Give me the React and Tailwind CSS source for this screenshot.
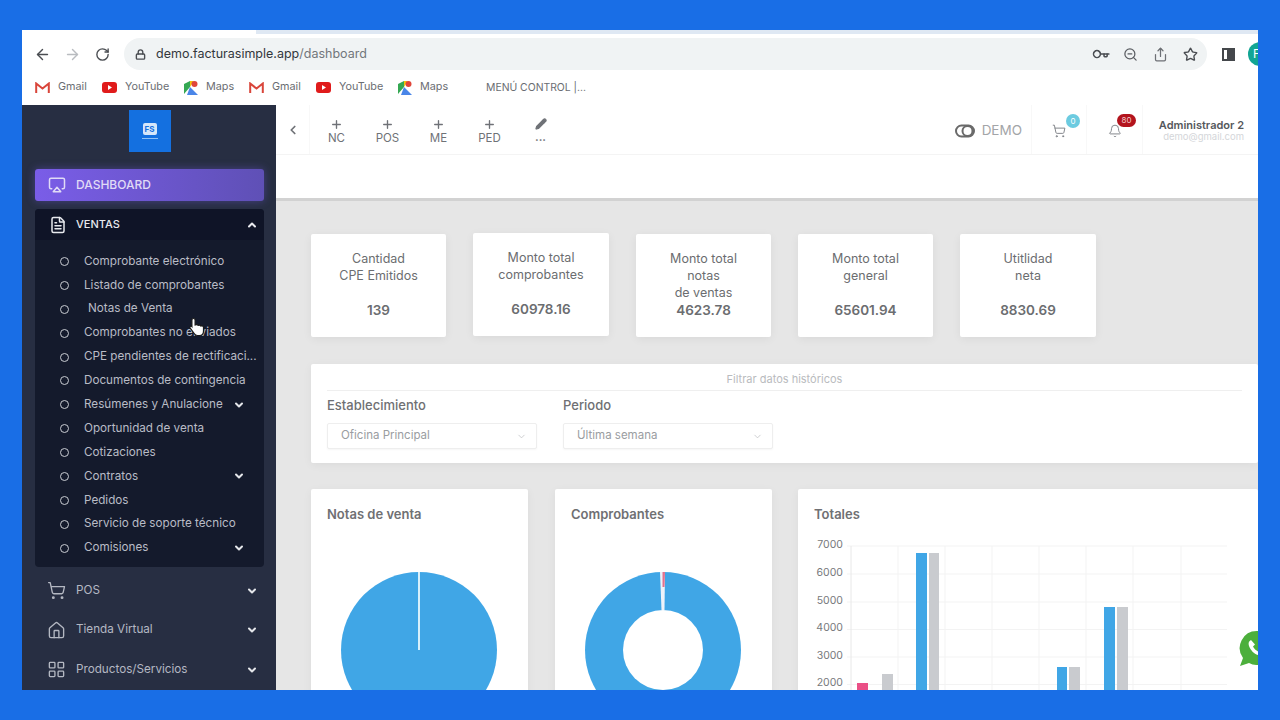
import React from 'react';
import {
    Airplay, ArrowLeft, ArrowRight, Bell, ChevronDown, ChevronLeft, ChevronUp, FileText, Home, Key, LayoutGrid,
    Lock, Pencil, Plus, RotateCw, Share, ShoppingCart, Star, ZoomOut,
} from 'lucide-react';

const ventas = [
    { label: 'Comprobante electrónico' },
    { label: 'Listado de comprobantes' },
    { label: 'Notas de Venta', indent: true },
    { label: 'Comprobantes no enviados' },
    { label: 'CPE pendientes de rectificaci...' },
    { label: 'Documentos de contingencia' },
    { label: 'Resúmenes y Anulacione', more: true },
    { label: 'Oportunidad de venta' },
    { label: 'Cotizaciones' },
    { label: 'Contratos', more: true },
    { label: 'Pedidos' },
    { label: 'Servicio de soporte técnico' },
    { label: 'Comisiones', more: true },
];

const stats = [
    { lines: ['Cantidad', 'CPE Emitidos'], value: '139', width: 'w-[135px]' },
    { lines: ['Monto total', 'comprobantes'], value: '60978.16', width: 'w-[136px] -translate-y-[1px]' },
    { lines: ['Monto total', 'notas', 'de ventas'], value: '4623.78', width: 'w-[135px]' },
    { lines: ['Monto total', 'general'], value: '65601.94', width: 'w-[135px]' },
    { lines: ['Utitlidad', 'neta'], value: '8830.69', width: 'w-[136px]' },
];

const shortcuts = ['NC', 'POS', 'ME', 'PED'];

const GmailIcon = () => (
    <svg width="15" height="12" viewBox="0 0 15 12" fill="none">
        <path d="M1.200 11V1.500L7.500 6.500 13.800 1.500V11" stroke="#d9453a" strokeWidth="2" />
    </svg>
);

const YoutubeIcon = () => (
    <svg width="15" height="11" viewBox="0 0 15 11">
        <rect width="15" height="11" rx="3" fill="#e01b1b" />
        <path d="M6 3l4 2.500L6 8z" fill="#fff" />
    </svg>
);

const MapsIcon = () => (
    <svg width="14" height="14" viewBox="0 0 14 14">
        <path d="M0 3l6-3v6L0 13z" fill="#35a853" />
        <path d="M6 6l8 8H3z" fill="#4a86e8" />
        <path d="M6 0h4L6 6z" fill="#f4c20d" />
        <circle cx="10.500" cy="3" r="3" fill="#e0453a" />
    </svg>
);

const Bookmark = ({ icon, label, className }) => (
    <div className={`flex items-center gap-[8px] shrink-0 ${className}`}>
        {icon}
        <span>{label}</span>
    </div>
);

const BrowserBar = () => (
    <div className="bg-white shrink-0">
        <div className="h-[4px] bg-[#dfe8f3]">
            <div className="h-full w-[234px] bg-white" />
        </div>
        <div className="h-[36px] mt-[2px] flex items-center text-[#4a4d52]">
            <ArrowLeft size={17} strokeWidth={2} className="ml-[12px] shrink-0" />
            <ArrowRight size={17} strokeWidth={2} className="ml-[13px] text-[#b9bcc0] shrink-0" />
            <RotateCw size={15} strokeWidth={2.2} className="ml-[14px] shrink-0" />
            <div className="ml-[14px] w-[1083px] h-[32px] rounded-full bg-[#f0f3f4] flex items-center shrink-0">
                <Lock size={11} strokeWidth={3} className="ml-[11px]" />
                <span className="ml-[10px] text-[12.5px] text-[#33373c]">
                    demo.facturasimple.app<span className="text-[#72767b]">/dashboard</span>
                </span>
                <div className="ml-auto mr-[9px] flex items-center gap-[15px]">
                    <Key size={15} strokeWidth={2.5} className="rotate-45" />
                    <ZoomOut size={15} className="text-[#5a5d62]" />
                    <Share size={15} className="text-[#6d7075]" />
                    <Star size={15} strokeWidth={2.2} />
                </div>
            </div>
            <div className="ml-[15px] w-[13px] h-[13px] border-2 border-[#44474b] flex justify-end shrink-0">
                <div className="w-[6px] bg-[#44474b]" />
            </div>
            <div className="ml-[13px] w-[24px] h-[24px] rounded-full bg-[#12a594] shrink-0 text-white text-[12px] pl-[5px] leading-[24px]">
                F
            </div>
        </div>
        <div className="h-[33px] pb-[2px] flex items-center text-[10.8px] text-[#6a6d72] pl-[13px]">
            <Bookmark icon={<GmailIcon />} label="Gmail" className="w-[67px]" />
            <Bookmark icon={<YoutubeIcon />} label="YouTube" className="w-[82px]" />
            <Bookmark icon={<MapsIcon />} label="Maps" className="w-[65px]" />
            <Bookmark icon={<GmailIcon />} label="Gmail" className="w-[67px]" />
            <Bookmark icon={<YoutubeIcon />} label="YouTube" className="w-[82px]" />
            <Bookmark icon={<MapsIcon />} label="Maps" className="w-[88px]" />
            <span className="text-[10.4px]">MENÚ CONTROL |...</span>
        </div>
    </div>
);

const SideItem = ({ icon: Icon, label }) => (
    <div className="h-[39.5px] flex items-center pl-[25px] pr-[18px] text-[#b4b8c2]">
        <Icon size={19} strokeWidth={1.7} />
        <span className="ml-[10px] text-[11.7px]">{label}</span>
        <ChevronDown size={12} strokeWidth={4} className="ml-auto text-[#e4e6ea]" />
    </div>
);

const Sidebar = () => (
    <aside className="w-[254px] shrink-0 bg-[#272e42] pl-[13px] pr-[12px] pt-[5px] overflow-hidden">
        <div className="mx-auto w-[42px] h-[42px] bg-[#1470e0] flex flex-col items-center justify-center">
            <div className="w-[14px] h-[12px] rounded-[2px] bg-[#d5e6fa] text-[#1470e0] text-[8px] font-bold leading-[12px] text-center">
                FS
            </div>
            <div className="w-[16px] h-[1px] mt-[3px] bg-[#8fc0f5]" />
        </div>
        <div className="mt-[17px] h-[32px] rounded-[3px] bg-gradient-to-r from-[#7a5de8] to-[#5f50b6] shadow-[0_0_8px_rgba(110,90,220,0.45)] flex items-center pl-[13px] text-[#e0dbf6]">
            <Airplay size={18} strokeWidth={2} />
            <span className="ml-[10px] text-[12px] font-medium">DASHBOARD</span>
        </div>
        <div className="mt-[8px] h-[358px] rounded-[4px] bg-[#141a2c]">
            <div className="h-[31px] rounded-t-[4px] bg-[#0f1427] flex items-center pl-[14px] pr-[6px] text-[#e8e9ee]">
                <FileText size={18} strokeWidth={2} />
                <span className="ml-[9px] text-[11px] font-medium">VENTAS</span>
                <ChevronUp size={12} strokeWidth={4} className="ml-auto" />
            </div>
            <ul className="pt-[9.500px] text-[11.7px] text-[#b9bcc6]">
                {ventas.map((item) => (
                    <li key={item.label} className="h-[23.9px] flex items-center pl-[25px]">
                        <span className="w-[9px] h-[9px] rounded-full border-[1.75px] border-[#c9ccd2] shrink-0" />
                        <span className={`${item.indent ? 'ml-[19px]' : 'ml-[15px]'} whitespace-nowrap`}>{item.label}</span>
                        {item.more && (
                            <ChevronDown size={12} strokeWidth={4} className="ml-auto mr-[19px] text-[#e4e6ea]" />
                        )}
                    </li>
                ))}
            </ul>
        </div>
        <div className="-ml-[13px] -mr-[12px] pt-[4px]">
            <SideItem icon={ShoppingCart} label="POS" />
            <SideItem icon={Home} label="Tienda Virtual" />
            <SideItem icon={LayoutGrid} label="Productos/Servicios" />
        </div>
    </aside>
);

const TopBar = () => (
    <header className="h-[50px] bg-white flex items-center border-b border-[#f4f4f4] text-[#6f7277] shrink-0">
        <div className="w-[34px] h-full flex items-center justify-center border-r border-[#f8f8f8]">
            <ChevronLeft size={14} strokeWidth={3} />
        </div>
        <div className="flex pl-[1px] pt-[3px]">
            {shortcuts.map((s) => (
                <div key={s} className="w-[51px] flex flex-col items-center text-[11.5px] leading-[14px]">
                    <Plus size={13} strokeWidth={2.5} />
                    <span>{s}</span>
                </div>
            ))}
            <div className="w-[51px] flex flex-col items-center text-[11px] font-bold leading-[14px]">
                <Pencil size={12} strokeWidth={2.5} fill="currentColor" />
                <span>...</span>
            </div>
        </div>
        <div className="ml-auto flex items-center h-full">
            <svg width="20" height="14" viewBox="0 0 20 14" fill="none" stroke="#6a6a6a" strokeWidth="2" className="mt-[2px] -ml-[2px]">
                <rect x="1" y="1.500" width="18" height="11" rx="5.500" />
                <circle cx="12.500" cy="7" r="5" />
            </svg>
            <span className="ml-[7px] pt-[2px] text-[13.5px] text-[#a3a5a8]">DEMO</span>
            <div className="ml-[9px] w-[56px] h-full border-x border-[#f8f8f8] flex items-center justify-center relative pt-[2px]">
                <ShoppingCart size={14} strokeWidth={1.6} className="text-[#7c7f84]" />
                <span className="absolute left-[34px] top-[9px] w-[14px] h-[14px] rounded-full bg-[#6ccbe0] text-white text-[8px] text-center leading-[14px]">
                    0
                </span>
            </div>
            <div className="w-[56px] h-full border-r border-[#f8f8f8] flex items-center justify-center relative pt-[2px]">
                <Bell size={14} strokeWidth={1.6} className="text-[#7c7f84]" />
                <span className="absolute left-[30px] top-[9px] w-[19px] h-[13px] rounded-full bg-[#b3141d] text-[#f3c9c9] text-[8px] text-center leading-[13px]">
                    80
                </span>
            </div>
            <div className="w-[102px] pr-[1px] pt-[2px] text-right leading-[11px] whitespace-nowrap">
                <div className="text-[11px] font-semibold text-[#55585c]">Administrador 2</div>
                <div className="text-[9.500px] text-[#d4d6d9]">demo@gmail.com</div>
            </div>
            <div className="w-[13px]" />
        </div>
    </header>
);

const StatCard = ({ lines, value, width }) => (
    <div className={`${width} h-[103px] bg-white rounded-[2px] shadow-[0_2px_10px_rgba(0,0,0,0.06)] pt-[16px] text-center text-[#6b6d70] text-[12.5px] leading-[17px] flex flex-col`}>
        <div>
            {lines.map((l) => (
                <div key={l}>{l}</div>
            ))}
        </div>
        <div className={`text-[13.5px] font-semibold ${lines.length === 3 ? 'mt-[1px]' : 'mt-[18px]'}`}>{value}</div>
    </div>
);

const SelectBox = ({ label, value, className }) => (
    <div className={className}>
        <div className="text-[13px] font-medium text-[#6f7073] leading-[16px]">{label}</div>
        <div className="mt-[10px] w-[210px] h-[26px] bg-white border border-[#eeeeee] rounded-[2px] shadow-[0_1px_2px_rgba(0,0,0,0.04)] flex items-center pl-[13px] pr-[9px] text-[11.5px] text-[#9a9da1]">
            <span>{value}</span>
            <ChevronDown size={11} strokeWidth={1.5} className="ml-auto text-[#b9bbbe]" />
        </div>
    </div>
);

const Filters = () => (
    <div className="mt-[27px] h-[99px] bg-white rounded-[2px] shadow-[0_2px_10px_rgba(0,0,0,0.05)] px-[16px] pt-[9px]">
        <div className="h-[18px] border-b border-[#efefef] text-center text-[11px] text-[#b9bbbe] leading-[12px]">
            Filtrar datos históricos
        </div>
        <div className="flex mt-[6px]">
            <SelectBox label="Establecimiento" value="Oficina Principal" />
            <SelectBox label="Periodo" value="Última semana" className="ml-[26px]" />
        </div>
    </div>
);

const ChartCard = ({ title, className, children }) => (
    <div className={`h-[230px] bg-white rounded-[2px] shadow-[0_2px_10px_rgba(0,0,0,0.05)] shrink-0 ${className}`}>
        <div className="pt-[17px] pl-[16px] text-[13px] font-semibold text-[#6f7073] leading-[16px]">{title}</div>
        {children}
    </div>
);

const PieChart = () => (
    <svg width="217" height="150" viewBox="0 0 217 150" className="mt-[45px]">
        <circle cx="108" cy="83" r="78" fill="#40a6e6" />
        <path d="M108 5V83" stroke="#d8f0fb" strokeWidth="2" />
    </svg>
);

const DonutChart = () => (
    <svg width="217" height="150" viewBox="0 0 217 150" className="mt-[45px]">
        <circle cx="108" cy="83" r="78" fill="#40a6e6" />
        <path d="M105 5H110L109.500 43H106.500Z" fill="#eef2fa" />
        <path d="M107.500 5H110L109.500 20H107.500Z" fill="#e2728f" />
        <circle cx="108" cy="83" r="40" fill="#fff" />
    </svg>
);

const BarChart = () => {
    const rows = [
        { y: 545, label: '7000' },
        { y: 573, label: '6000' },
        { y: 601, label: '5000' },
        { y: 628.5, label: '4000' },
        { y: 656, label: '3000' },
        { y: 683.5, label: '2000' },
    ];
    const cols = [851, 898, 945, 992, 1039, 1086, 1133, 1181];
    const bars = [
        { x: 857, w: 11, y: 682, fill: '#ea4f86' },
        { x: 882, w: 11, y: 673, fill: '#c9cbcf' },
        { x: 916, w: 11, y: 552, fill: '#40a6e6' },
        { x: 929, w: 10, y: 552, fill: '#c9cbcf' },
        { x: 1057, w: 10, y: 666, fill: '#40a6e6' },
        { x: 1069, w: 11, y: 666, fill: '#c9cbcf' },
        { x: 1104, w: 11, y: 606, fill: '#40a6e6' },
        { x: 1117, w: 11, y: 606, fill: '#c9cbcf' },
    ];
    return (
        <svg width="460" height="170" viewBox="798 530 460 170" className="mt-[9px]">
            {rows.map((r) => (
                <g key={r.label}>
                    <path d={`M847 ${r.y}H1227`} stroke="#f3f3f3" />
                    <text x="843" y={r.y + 1.5} textAnchor="end" fontSize="10.5" fill="#77797c" fontFamily="Inter, sans-serif">
                        {r.label}
                    </text>
                </g>
            ))}
            {cols.map((x) => (
                <path key={x} d={`M${x} 545V700`} stroke={x === 851 ? '#e8e8e8' : '#f3f3f3'} />
            ))}
            {bars.map((b) => (
                <rect key={b.x} x={b.x} y={b.y} width={b.w} height={700 - b.y} fill={b.fill} />
            ))}
        </svg>
    );
};

const App = () => (
    <div className="w-[1280px] h-[720px] bg-[#196ee6] pt-[30px] pb-[30px] px-[22px] font-['Inter',sans-serif]">
        <div className="relative w-[1236px] h-[660px] overflow-hidden flex flex-col">
            <BrowserBar />
            <div className="flex flex-1 min-h-0">
                <Sidebar />
                <main className="flex-1 min-w-0 flex flex-col bg-[#e6e6e6]">
                    <TopBar />
                    <div className="h-[46px] bg-white border-b-[3px] border-[#d2d2d2] shrink-0" />
                    <div className="pl-[35px] pt-[33px]">
                        <div className="flex gap-[27px]">
                            {stats.map((s) => (
                                <StatCard key={s.value} {...s} />
                            ))}
                        </div>
                        <Filters />
                        <div className="mt-[26px] flex gap-[27px]">
                            <ChartCard title="Notas de venta" className="w-[217px]">
                                <PieChart />
                            </ChartCard>
                            <ChartCard title="Comprobantes" className="w-[217px]">
                                <DonutChart />
                            </ChartCard>
                            <ChartCard title="Totales" className="w-[460px] -ml-[1px]">
                                <BarChart />
                            </ChartCard>
                        </div>
                    </div>
                </main>
            </div>

            {/* puntero del video */}
            <svg width="17" height="20" viewBox="0 0 17 20" className="absolute left-[167px] top-[287px]">
                <path d="M4.500 1.500c1 0 1.600.6 1.600 1.600V8l1.400-.4c.8-.2 1.400.2 1.600.8l1.300-.2c.7-.1 1.200.3 1.400.8l1-.1c1-.1 1.700.5 1.700 1.500V14c0 2.500-1.500 4.500-4 4.500H8.500c-1.500 0-2.500-.6-3.300-1.800L1.200 11c-.8-1.300.8-2.500 1.700-1.400V3.100C2.900 2.100 3.500 1.500 4.500 1.500Z" fill="#fff" stroke="#1a1a1a" strokeWidth="1.200" />
            </svg>

            {/* boton flotante */}
            <svg width="38" height="38" viewBox="0 0 38 38" className="absolute left-[1216px] top-[600px]">
                <path d="M19 1a17 17 0 1 1-8 32L2 36l3-8A17 17 0 0 1 19 1Z" fill="#4caf3c" />
                <path d="M13 10c-2 1-3 3-2 6 1.500 4 5 8 9 9 3 1 5 0 6-2l-4-3-2 1.500c-2-1-4-3-5-5l2-2Z" fill="#fff" />
            </svg>
        </div>
    </div>
);

export default App;
